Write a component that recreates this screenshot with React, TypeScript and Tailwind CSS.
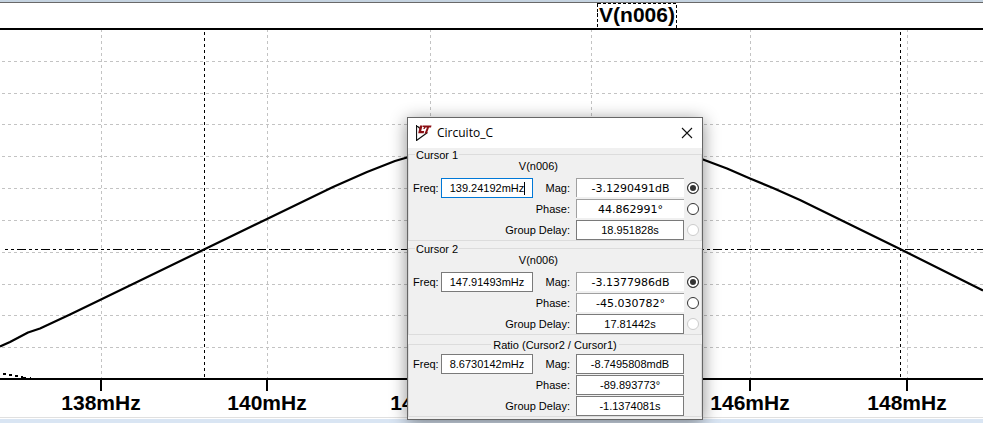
import type { ReactNode } from "react";

const gridRows = [61, 93, 124, 156, 188, 220, 252, 284, 315, 347];
const gridColumns = [101, 267, 430, 591, 750, 907];
const cursorColumns = [204, 900];
const axisLabels = [
  { x: 101, text: "138mHz" },
  { x: 267, text: "140mHz" },
  { x: 430, text: "142mHz" },
  { x: 750, text: "146mHz" },
  { x: 907, text: "148mHz" },
];

function Plot() {
  return (
    <svg
      viewBox="0 3 983 414"
      preserveAspectRatio="xMidYMid slice"
      className="block w-full bg-white"
      role="img"
      aria-label="V(n006) frequency response"
    >
      <g shapeRendering="crispEdges" fill="none">
        <g stroke="#c3c3c3" strokeDasharray="3 3">
          {gridRows.map((y) => (
            <path key={y} d={`M2 ${y}.5H983`} />
          ))}
          {gridColumns.map((x) => (
            <path key={x} d={`M${x}.5 29V378`} />
          ))}
        </g>
        <g stroke="#000">
          {cursorColumns.map((x) => (
            <path key={x} d={`M${x}.5 32V378`} strokeDasharray="3 3" />
          ))}
          <path d="M5 249.5H983" strokeDasharray="3 3 3 3 9 3" />
        </g>
        <path d="M0 29H983M0 379H983" stroke="#000" strokeWidth="2" />
        <path
          d={gridColumns.map((x) => `M${x} 380V391`).join("")}
          stroke="#000"
          strokeWidth="2"
        />
        <path
          d="M3 373.500h3M9 374.500h3M15 375.500h3M21 376.500h2M23 377.500h3M30 377.500h1"
          stroke="#000"
          strokeWidth="2"
        />
        <rect x="597.500" y="3.500" width="79" height="25" stroke="#000" strokeDasharray="3 2" />
      </g>
      <path
        d="M0 346.500L10 342L28 332.500L40 328.500L70 314.500L101 299.500L204 249.500L267 219L300 203L333 187L367 172L395 161L407 157.500L470 140L550 131L630 138L703 159.500L727 168.500L750 178.500L773 188L800 200L850 224.500L900 249L983 290.500"
        fill="none"
        stroke="#000"
        strokeWidth="2.200"
        strokeLinejoin="round"
      />
      <g
        className="font-['Liberation_Sans',Arial,sans-serif] text-[21px] font-bold"
        textAnchor="middle"
      >
        <text x="637" y="22">V(n006)</text>
        {axisLabels.map(({ x, text }) => (
          <text key={text} x={x} y="410">
            {text}
          </text>
        ))}
      </g>
    </svg>
  );
}

type Tone = "outlined" | "focused" | "sunken";

const tones: Record<Tone, string> = {
  outlined: "h-5 border border-[#7a7a7a]",
  focused: "h-5 border border-[#0078d7]",
  sunken: "h-[19px] border-t border-l border-[#a0a0a0] font-['DejaVu_Sans',Tahoma,sans-serif]",
};

function Box({ id, value, tone }: { id: string; value: string; tone: Tone }) {
  return (
    <div className="relative h-5">
      <input
        id={id}
        defaultValue={value}
        className={`block w-full bg-white text-center outline-none ${tones[tone]}`}
      />
      {tone === "focused" && <span className="absolute top-1 right-2 h-[13px] w-px bg-black" />}
    </div>
  );
}

function Choice({ name, label, checked, disabled }: { name: string; label: string; checked?: boolean; disabled?: boolean }) {
  return (
    <input
      type="radio"
      name={name}
      aria-label={label}
      defaultChecked={checked}
      disabled={disabled}
      className="size-3 appearance-none justify-self-center rounded-full border border-[#333] bg-white checked:bg-[#333] checked:shadow-[inset_0_0_0_2px_white] disabled:border-[#cccccc]"
    />
  );
}

interface GroupProps {
  id: string;
  title: string;
  trace?: string;
  freq: string;
  mag: string;
  phase: string;
  delay: string;
  focused?: boolean;
}

function Group({ id, title, trace, freq, mag, phase, delay, focused }: GroupProps) {
  const tone: Tone = trace ? "sunken" : "outlined";
  const choice = (label: string, checked?: boolean, disabled?: boolean): ReactNode =>
    trace ? <Choice name={id} label={label} checked={checked} disabled={disabled} /> : <span />;
  return (
    <fieldset className="min-w-0 border border-[#dcdcdc]">
      <legend className={trace ? "ml-1.5 h-[13px] px-px leading-[15px]" : "mx-auto h-[13px] px-0.5 leading-[15px]"}>
        {title}
      </legend>
      {trace ? <p className="h-[17px] pr-[143px] text-right leading-[11px]">{trace}</p> : <div className="h-[3px]" />}
      <div className="grid grid-cols-[28px_92px_1fr_108px_17px] items-center gap-y-px pl-1">
        <label htmlFor={`${id}-freq`}>Freq:</label>
        <Box id={`${id}-freq`} value={freq} tone={focused ? "focused" : "outlined"} />
        <label htmlFor={`${id}-mag`} className="pr-1.5 text-right">Mag:</label>
        <Box id={`${id}-mag`} value={mag} tone={tone} />
        {choice("Magnitude", true)}
        <label htmlFor={`${id}-phase`} className="col-span-3 pr-1.5 text-right">Phase:</label>
        <Box id={`${id}-phase`} value={phase} tone={tone} />
        {choice("Phase")}
        <label htmlFor={`${id}-delay`} className="col-span-3 pr-1.5 text-right">Group Delay:</label>
        <Box id={`${id}-delay`} value={delay} tone="outlined" />
        {choice("Group delay", false, true)}
      </div>
    </fieldset>
  );
}

function CursorDialog() {
  return (
    <section
      role="dialog"
      aria-label="Circuito_C"
      className="absolute top-[117px] left-[407px] w-[296px] border border-[#666] bg-[#f0f0f0] pb-0.5 font-['Liberation_Sans',Arial,sans-serif] text-[11px] leading-[13px] text-black shadow-[0_3px_16px_rgba(0,0,0,0.45)]"
    >
      <header className="flex h-[30px] items-center bg-white pr-[9px] pl-2">
        <svg viewBox="0 0 16 16" className="size-4" aria-hidden="true">
          <path d="M.5 0V15.500L11.500 7.500M.5 .5L4 3.500" fill="none" stroke="#111" strokeWidth="1.200" />
          <path d="M4 .5h2.500L5.200 6H8.200L7.700 8.200H2.200ZM7 .5H15.500L15 2.500H13L10.800 8.500H8.500L11 2.500H9.500L8.500 4H7.300L8 2H6.500Z" fill="#8b0f14" />
        </svg>
        <h1 className="ml-[5px] flex-1 font-['Open_Sans','Noto_Sans',sans-serif] text-[12px] leading-4">Circuito_C</h1>
        <button type="button" aria-label="Close">
          <svg viewBox="0 0 12 12" className="size-3" aria-hidden="true">
            <path d="M1 1L11 11M11 1L1 11" stroke="#111" strokeWidth="1.100" />
          </svg>
        </button>
      </header>
      <Group
        id="cursor1"
        title="Cursor 1"
        trace="V(n006)"
        freq="139.24192mHz"
        mag="-3.1290491dB"
        phase="44.862991°"
        delay="18.951828s"
        focused
      />
      <div className="mt-px">
        <Group
          id="cursor2"
          title="Cursor 2"
          trace="V(n006)"
          freq="147.91493mHz"
          mag="-3.1377986dB"
          phase="-45.030782°"
          delay="17.81442s"
        />
      </div>
      <div className="mt-[3px]">
        <Group
          id="ratio"
          title="Ratio (Cursor2 / Cursor1)"
          freq="8.6730142mHz"
          mag="-8.7495808mdB"
          phase="-89.893773°"
          delay="-1.1374081s"
        />
      </div>
    </section>
  );
}

export default function App() {
  return (
    <main className="relative overflow-hidden bg-white">
      <div className="h-[3px] border-b border-[#696969] bg-[#c5d3e0]" />
      <Plot />
      <div className="h-1.5 border-t border-[#e0e0e0] bg-white pt-px">
        <div className="h-1 bg-[#d9e5f3]" />
      </div>
      <CursorDialog />
    </main>
  );
}
